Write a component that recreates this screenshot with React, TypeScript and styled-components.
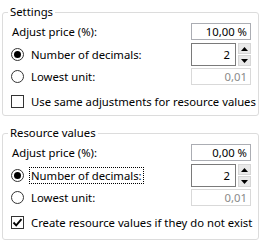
import React from 'react';
import styled, { createGlobalStyle } from 'styled-components';

const GlobalStyle = createGlobalStyle`
  html, body {
    margin: 0;
    padding: 0;
    background: #ffffff;
  }
  body {
    padding-top: 4px;
    font-family: 'Noto Sans', 'Open Sans', sans-serif;
    font-size: 11.3px;
    color: #000000;
  }
`;

const Group = styled.fieldset<{ $gapTop?: number; $padBottom?: number }>`
  margin: ${({ $gapTop }) => $gapTop ?? 0}px 2px 0;
  padding: 0 7px ${({ $padBottom }) => $padBottom ?? 5}px 7px;
  border: 1px solid #dcdcdc;
  border-radius: 3px;
  min-width: 0;
`;

const Legend = styled.legend`
  margin-left: -2px;
  padding: 0 2px;
  line-height: 16px;
`;

const Row = styled.div<{ $top: number; $height: number }>`
  display: flex;
  align-items: center;
  justify-content: space-between;
  margin-top: ${({ $top }) => $top}px;
  height: ${({ $height }) => $height}px;
  padding-left: 1px;
`;

const Option = styled.label`
  display: flex;
  align-items: center;
  gap: 6px;
  white-space: nowrap;
`;

const Text = styled.span<{ $focused?: boolean }>`
  line-height: 15px;
  padding: 0 1px;
  margin-left: -1px;
  border: 1px dotted ${({ $focused }) => ($focused ? '#000000' : 'transparent')};
`;

const Radio = styled.span<{ $checked?: boolean }>`
  position: relative;
  box-sizing: border-box;
  width: 13px;
  height: 13px;
  border: 1px solid #333333;
  border-radius: 50%;
  background: #ffffff;

  &::after {
    content: '';
    display: ${({ $checked }) => ($checked ? 'block' : 'none')};
    position: absolute;
    left: 2px;
    top: 2px;
    width: 7px;
    height: 7px;
    border-radius: 50%;
    background: #000000;
  }
`;

const Check = styled.span`
  box-sizing: border-box;
  width: 13px;
  height: 13px;
  border: 1px solid #333333;
  background: #ffffff;
  display: flex;
  align-items: center;
  justify-content: center;
`;

const Field = styled.div<{ $disabled?: boolean; $height?: number; $width?: number }>`
  box-sizing: border-box;
  width: ${({ $width }) => $width ?? 60}px;
  height: ${({ $height }) => $height ?? 17}px;
  border: 1px solid ${({ $disabled }) => ($disabled ? '#d9d9d9' : '#abadb3')};
  color: ${({ $disabled }) => ($disabled ? '#8a8a8a' : '#000000')};
  text-align: right;
  padding-right: 3px;
  line-height: 15px;
  background: #ffffff;
`;

const Spinner = styled.div`
  display: flex;
  gap: 2px;
  height: 23px;
`;

const SpinField = styled(Field)`
  border-color: #7a7a7a;
  line-height: 21px;
  padding-right: 5px;
`;

const SpinButtons = styled.div`
  display: flex;
  flex-direction: column;
  justify-content: space-between;
  width: 13px;
`;

const SpinButton = styled.div`
  box-sizing: border-box;
  height: 11px;
  border: 1px solid #d6d6d6;
  background: #e9e9e9;
  display: flex;
  align-items: center;
  justify-content: center;
`;

const Arrow = ({ down }: { down?: boolean }) => (
  <svg width="7" height="4" viewBox="0 0 7 4">
    <path d={down ? 'M0 0 H7 L3.5 4 Z' : 'M0 4 H7 L3.5 0 Z'} fill="#000" />
  </svg>
);

const Tick = () => (
  <svg width="11" height="11" viewBox="0 0 11 11">
    <path d="M1.5 5.5 L4.2 8.3 L9.5 2.2" fill="none" stroke="#000" strokeWidth="1.9" />
  </svg>
);

function PriceGroup({
  title,
  gapTop,
  padBottom,
  price,
  focused,
  checked,
  checkText,
}: {
  title: string;
  gapTop?: number;
  padBottom?: number;
  price: string;
  focused?: boolean;
  checked?: boolean;
  checkText: string;
}) {
  return (
    <Group $gapTop={gapTop} $padBottom={padBottom}>
      <Legend>{title}</Legend>
      <Row $top={3} $height={17}>
        <Text>Adjust price (%):</Text>
        <Field>{price}</Field>
      </Row>
      <Row $top={3} $height={23}>
        <Option>
          <Radio $checked />
          <Text $focused={focused}>Number of decimals:</Text>
        </Option>
        <Spinner>
          <SpinField $width={45} $height={23}>2</SpinField>
          <SpinButtons>
            <SpinButton>
              <Arrow />
            </SpinButton>
            <SpinButton>
              <Arrow down />
            </SpinButton>
          </SpinButtons>
        </Spinner>
      </Row>
      <Row $top={2} $height={17}>
        <Option>
          <Radio />
          <Text>Lowest unit:</Text>
        </Option>
        <Field $disabled>0,01</Field>
      </Row>
      <Row $top={8} $height={17}>
        <Option>
          <Check>{checked && <Tick />}</Check>
          <Text>{checkText}</Text>
        </Option>
      </Row>
    </Group>
  );
}

export default function App() {
  return (
    <>
      <GlobalStyle />
      <PriceGroup
        title="Settings"
        price="10,00 %"
        checkText="Use same adjustments for resource values"
      />
      <PriceGroup
        title="Resource values"
        gapTop={9}
        padBottom={8}
        price="0,00 %"
        focused
        checked
        checkText="Create resource values if they do not exist"
      />
    </>
  );
}
